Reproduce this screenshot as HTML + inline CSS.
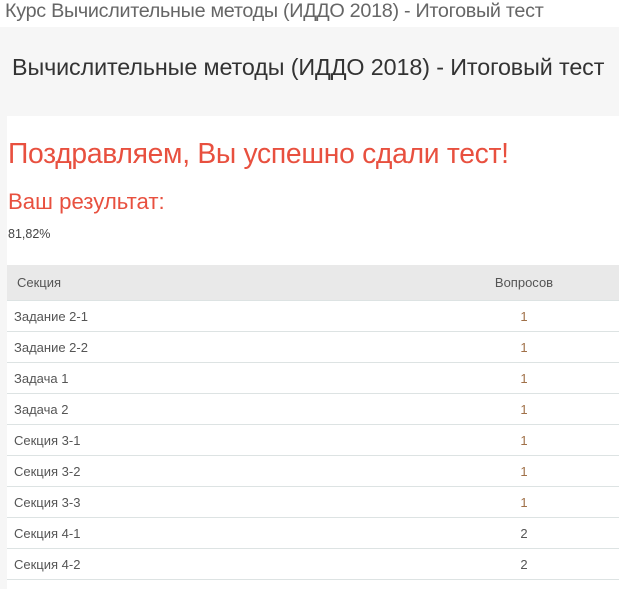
<!DOCTYPE html>
<html><head><meta charset="utf-8"><style>
body{margin:0;width:619px;height:589px;overflow:hidden;background:#f6f6f6;font-family:"Liberation Sans","DejaVu Sans",sans-serif;}
.top{position:absolute;left:0;top:0;width:619px;height:27px;background:#fff;}
.top span{position:absolute;left:5px;top:0px;font-size:19.8px;color:#666;letter-spacing:-0.3px;white-space:nowrap;}
.h1{position:absolute;left:12px;top:54px;font-size:23.3px;color:#333;white-space:nowrap;letter-spacing:-0.1px;}
.panel{position:absolute;left:7px;top:116px;width:612px;height:473px;background:#fff;}
.congr{position:absolute;left:1px;top:21px;font-size:28.3px;color:#e8503f;white-space:nowrap;letter-spacing:-0.3px;}
.res{position:absolute;left:1px;top:73px;font-size:22.2px;color:#e8503f;white-space:nowrap;}
.pct{position:absolute;left:1px;top:111px;font-size:12.5px;color:#444;}
table{position:absolute;left:0;top:149px;width:612px;border-collapse:collapse;font-size:13px;color:#555;}
th{background:#e9e9e9;height:35px;font-weight:normal;text-align:left;padding:0 0 0 10px;color:#555;}
th.c,td.c{text-align:center;padding:0;}
td{height:30px;border-top:1px solid #dde3e3;padding:0 0 0 7px;}
tr:last-child td{border-bottom:1px solid #dde3e3;}
td.c{width:0;}
td.c.o{color:#a07048;}
</style></head><body>
<div class="top"><span>Курс Вычислительные методы (ИДДО 2018) - Итоговый тест</span></div>
<div class="h1">Вычислительные методы (ИДДО 2018) - Итоговый тест</div>
<div class="panel">
<div class="congr">Поздравляем, Вы успешно сдали тест!</div>
<div class="res">Ваш результат:</div>
<div class="pct">81,82%</div>
<table>
<tr><th>Секция</th><th class="c" style="width:190px">Вопросов</th></tr>
<tr><td>Задание 2-1</td><td class="c o">1</td></tr>
<tr><td>Задание 2-2</td><td class="c o">1</td></tr>
<tr><td>Задача 1</td><td class="c o">1</td></tr>
<tr><td>Задача 2</td><td class="c o">1</td></tr>
<tr><td>Секция 3-1</td><td class="c o">1</td></tr>
<tr><td>Секция 3-2</td><td class="c o">1</td></tr>
<tr><td>Секция 3-3</td><td class="c o">1</td></tr>
<tr><td>Секция 4-1</td><td class="c">2</td></tr>
<tr><td>Секция 4-2</td><td class="c">2</td></tr>
</table>
</div>
</body></html>
